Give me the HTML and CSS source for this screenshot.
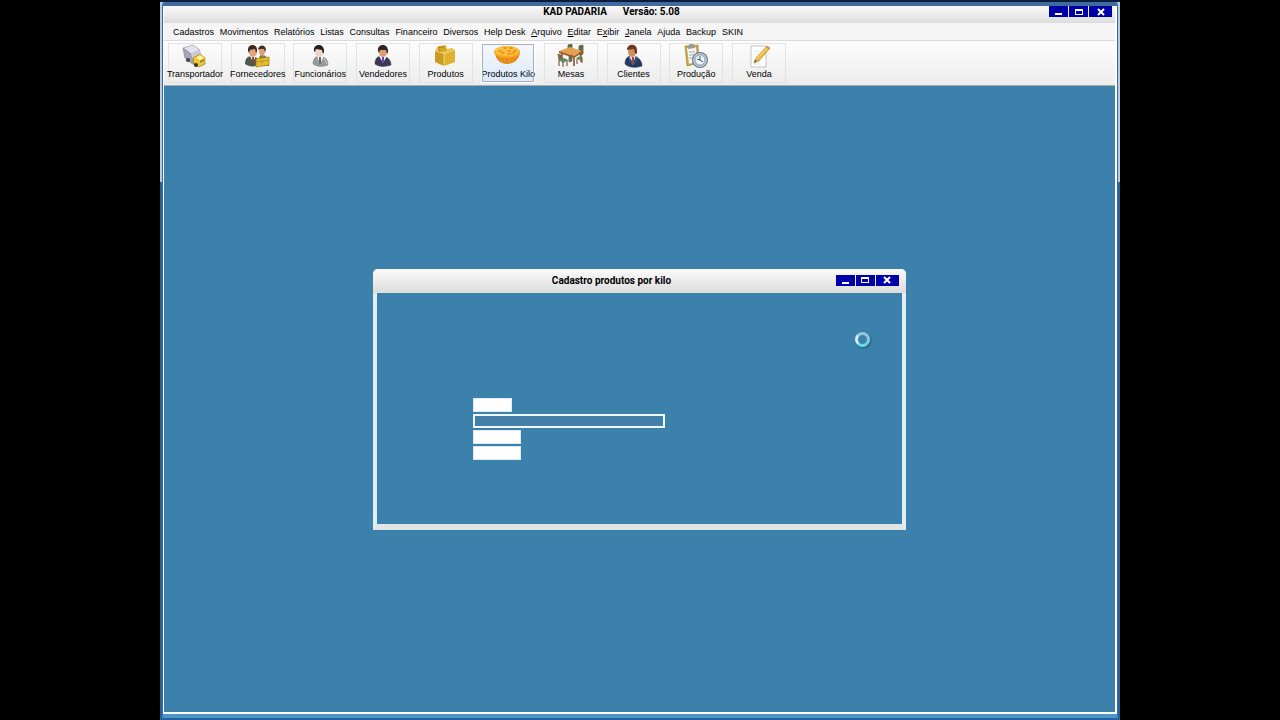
FILE: index.html
```
<!DOCTYPE html>
<html lang="pt-BR">
<head>
  <meta charset="UTF-8" />
  <meta name="viewport" content="width=device-width, initial-scale=1" />
  <title>KAD PADARIA</title>
  <link rel="stylesheet" href="styles.css">
</head>
<body>

  <div class="desktop">
    <div class="app">

      <!-- Barra de título -->
      <header class="titulo">
        <h1><span>KAD PADARIA</span><span>Versão: 5.08</span></h1>
        <div class="controles">
          <button type="button" aria-label="Minimizar"><i class="minimizar"></i></button>
          <button type="button" aria-label="Maximizar"><i class="maximizar"></i></button>
          <button type="button" class="fechar" aria-label="Fechar"><svg viewBox="0 0 8 8"><path d="M1 1L7 7M7 1L1 7" /></svg></button>
        </div>
      </header>

      <!-- Menu principal -->
      <nav class="menu">
        <div class="itens">
          <button type="button">Cadastros</button>
          <button type="button">Movimentos</button>
          <button type="button">Relatórios</button>
          <button type="button">Listas</button>
          <button type="button">Consultas</button>
          <button type="button">Financeiro</button>
          <button type="button">Diversos</button>
          <button type="button">Help Desk</button>
          <button type="button"><u>A</u>rquivo</button>
          <button type="button"><u>E</u>ditar</button>
          <button type="button">E<u>x</u>ibir</button>
          <button type="button"><u>J</u>anela</button>
          <button type="button">Ajuda</button>
          <button type="button">Backup</button>
          <button type="button">SKIN</button>
        </div>
      </nav>

      <!-- Barra de ferramentas -->
      <div class="barra">
        <div class="atalhos">
          <button type="button">
            <svg viewBox="0 0 28 24">
              <path d="M4 16l12 7 9-3-4-5z" fill="#b9b9b9" />
              <path d="M2 4l10-3 7 5-9 4z" fill="#e3e4ee" stroke="#8d8fa0" stroke-width=".6" />
              <path d="M2 4l8 6 3 10-9-6z" fill="#a4a6ba" stroke="#777990" stroke-width=".6" />
              <path d="M10 10l9-4 2 6-8 6z" fill="#c9cad8" />
              <path d="M12 14l7-4 5 4v6l-6 3-5-3z" fill="#f0c832" stroke="#a88718" stroke-width=".7" />
              <path d="M15 14l4-3 4 3-4 2z" fill="#fff3a0" />
              <path d="M19 17l4-2v2l-4 2z" fill="#8b8450" />
              <circle cx="15" cy="21" r="2" fill="#343434" />
              <circle cx="7" cy="16" r="2" fill="#444" />
            </svg>
            <span>Transportador</span>
          </button>
          <button type="button">
            <svg viewBox="0 0 28 24">
              <path d="M14 22c0-7 1-10 5-10s6 3 6 7v3z" fill="#6c7a61" />
              <ellipse cx="18" cy="7" rx="3" ry="5" fill="#dca07a" />
              <path d="M14 6c0-6 8-6 8 0l-1 2-1-3h-4z" fill="#4a3020" />
              <path d="M1 20c0-6 3-8 7-8s7 3 7 9c-5 2-10 2-14-1z" fill="#4c5a4b" />
              <path d="M6 12l3 6 3-6z" fill="#fff" />
              <path d="M8 13h2v5l-1 2-1-2z" fill="#a83a30" />
              <ellipse cx="9" cy="8" rx="4" ry="5" fill="#e0a680" />
              <path d="M4 7c-1-8 10-8 9 0l-1 2-1-4-5 1-1 3z" fill="#3c291f" />
              <path d="M16 14v-2h5v2" fill="none" stroke="#8d6b10" />
              <path d="M12 15l13-2v8l-13 2z" fill="#e8bd2c" stroke="#a57d12" stroke-width=".7" />
              <path d="M12 18l13-2M17 17h2v2h-2z" fill="#fff1a0" stroke="#a57d12" stroke-width=".6" />
            </svg>
            <span>Fornecedores</span>
          </button>
          <button type="button">
            <svg viewBox="0 0 28 24">
              <path d="M7 20c0-6 3-8 7-8s8 3 8 9c-5 2-11 2-15-1z" fill="#999" stroke="#777" stroke-width=".5" />
              <path d="M11 12l3 8 4-8z" fill="#f7f7f7" />
              <path d="M13 13h2v6l-1 2-1-2z" fill="#666" />
              <path d="M18 14l3 6" stroke="#c9c9c9" />
              <ellipse cx="13" cy="8" rx="4" ry="5" fill="#edd5c7" />
              <path d="M8 7c-1-8 11-8 10 1l-1 2-1-4-6-1-1 3z" fill="#202020" />
            </svg>
            <span>Funcionários</span>
          </button>
          <button type="button">
            <svg viewBox="0 0 28 24">
              <path d="M6 20c0-6 3-8 7-8s9 3 9 9c-6 2-12 2-16-1z" fill="#3b3857" stroke="#29263f" stroke-width=".5" />
              <path d="M10 12l4 7 4-7z" fill="#eef0fa" />
              <path d="M13 13h2v5l-1 2-1-2z" fill="#6c46a8" />
              <ellipse cx="14" cy="8" rx="4" ry="5" fill="#d99c75" />
              <path d="M9 7c-1-8 11-8 10 1l-1 2-1-4-6 0-1 3z" fill="#33231d" />
            </svg>
            <span>Vendedores</span>
          </button>
          <button type="button">
            <svg viewBox="0 0 28 24">
              <path d="M3 7l9 3v12l-9-4z" fill="#c99b24" />
              <path d="M12 10l11-4v12l-11 4z" fill="#dfb12f" />
              <path d="M3 7l3-5 8-1 1 4 5-1 3 2-11 4z" fill="#edc64e" />
              <path d="M6 3l7-1 1 4-7 2z" fill="#a97e18" />
              <path d="M7 4l6-1 2 4-7 1z" fill="#d6a625" />
              <path d="M12 10v12" stroke="#f4d56b" />
            </svg>
            <span>Produtos</span>
          </button>
          <button type="button" class="ativo">
            <svg viewBox="0 0 28 24">
              <path d="M1 7c0 8 5 13 12 13s13-5 13-13z" fill="#e58a16" />
              <path d="M5 13l4 5M10 14l2 5M16 14l-1 5M22 12l-5 6" stroke="#f09b2c" />
              <ellipse cx="13" cy="8" rx="13" ry="6" fill="#f5a925" />
              <ellipse cx="13" cy="7" rx="12" ry="5" fill="#fbc040" />
              <path d="M5 7h2M10 4h2M16 4h2M20 7h2M14 7h2M8 9h2M14 10h2M18 9h2" stroke="#df8415" stroke-width="1.5" stroke-linecap="round" />
            </svg>
            <span>Produtos Kilo</span>
          </button>
          <button type="button">
            <svg viewBox="0 0 28 24">
              <path d="M11 1l4-1v7l-4 1zM22 2l4-1v9l-4 1z" fill="#4e7354" stroke="#805025" stroke-width=".8" />
              <path d="M5 8v9M17 12v10M24 9v9" stroke="#8b4c19" stroke-width="1.5" />
              <path d="M2 7l11-4 12 4-8 5z" fill="#e2a154" />
              <path d="M2 7l15 5 8-5v2l-8 5-15-5z" fill="#a25a21" />
              <path d="M1 10l3 1 1 6-3-1zM12 12l3-1v6l-3 1z" fill="#4f7c5b" stroke="#8a5526" stroke-width=".7" />
              <path d="M2 16l5-2 4 2-5 3z" fill="#5c8966" />
              <path d="M2 16v6M6 18v5M10 16v6M20 15v5M25 14v5" stroke="#744016" />
              <path d="M19 14l4-2 3 2-4 2z" fill="#5c8966" />
            </svg>
            <span>Mesas</span>
          </button>
          <button type="button">
            <svg viewBox="0 0 28 24">
              <path d="M5 20c0-6 3-8 7-8s10 3 10 10c-6 2-13 2-17-2z" fill="#24395c" stroke="#172947" stroke-width=".5" />
              <path d="M9 12l4 7 3-7z" fill="#dfe8f2" />
              <path d="M12 13h2v6l-1 2-1-2z" fill="#ad4340" />
              <path d="M9 12l1 5 3 4M16 12v5l-3 4" fill="none" stroke="#4b698f" />
              <ellipse cx="12" cy="8" rx="4" ry="5" fill="#d68d59" />
              <path d="M7 6c0-7 10-7 10 0v4l-2-1-1-4-7 1z" fill="#6a3922" />
            </svg>
            <span>Clientes</span>
          </button>
          <button type="button">
            <svg viewBox="0 0 28 24">
              <path d="M3 2l13-1 1 18-12 3z" fill="#cda645" stroke="#9a7925" stroke-width=".6" />
              <path d="M5 4l9-1 1 14-8 3z" fill="#f2f4f5" />
              <path d="M6 2l2-2h3l2 2v2l-7 1z" fill="#9a9b98" />
              <path d="M7 8h6M7 11h5M7 14h3" stroke="#a9acb0" />
              <circle cx="18" cy="16" r="8" fill="#687786" />
              <circle cx="18" cy="16" r="7" fill="#b9c8d5" />
              <circle cx="18" cy="16" r="5" fill="#eef6fc" stroke="#77899b" stroke-width=".7" />
              <path d="M18 12v4l3 2M18 16l-3-1" fill="none" stroke="#405567" />
            </svg>
            <span>Produção</span>
          </button>
          <button type="button">
            <svg viewBox="0 0 28 24">
              <path d="M6 2h15v21H6z" fill="#fff" stroke="#b7b7b7" stroke-width=".8" />
              <path d="M8 20h8M8 17h4M9 7h7M9 10h5" stroke="#e2e4e8" />
              <path d="M9 19l2-5L22 2l3 2-11 13z" fill="#efb63d" stroke="#b98622" stroke-width=".6" />
              <path d="M12 15L23 3" stroke="#ffe38b" />
              <path d="M21 3l1-1 3 2-1 2z" fill="#c78e80" />
              <path d="M9 19l1-3 2 1z" fill="#555" />
            </svg>
            <span>Venda</span>
          </button>
        </div>
      </div>

      <!-- Área de trabalho -->
      <main class="area">
        <section class="janela">
          <header class="titulo">
            <h2>Cadastro produtos por kilo</h2>
            <div class="controles">
              <button type="button" aria-label="Minimizar"><i class="minimizar"></i></button>
              <button type="button" aria-label="Maximizar"><i class="maximizar"></i></button>
              <button type="button" class="fechar" aria-label="Fechar"><svg viewBox="0 0 8 8"><path d="M1 1L7 7M7 1L1 7" /></svg></button>
            </div>
          </header>
          <form class="formulario">
            <input type="text" class="codigo" aria-label="Código" />
            <input type="text" class="descricao" aria-label="Descrição" />
            <input type="text" class="valor" aria-label="Preço" />
            <input type="text" class="valor" aria-label="Estoque" />
          </form>
          <!-- Cursor de espera -->
          <div class="espera"></div>
        </section>
      </main>

    </div>
  </div>

</body>
</html>
```
FILE: styles.css
```
* {
  box-sizing: border-box;
}

body {
  margin: 0;
  background: #000;
  color: #000;
  font-family: "Liberation Sans", Arial, sans-serif;
  font-size: 9px;
  line-height: 12px;
}

button {
  margin: 0;
  padding: 0;
  border: none;
  background: none;
  color: inherit;
  font: inherit;
  white-space: nowrap;
}

h1, h2 {
  margin: 0;
  font-family: Roboto, sans-serif;
  font-size: 10px;
  line-height: 12px;
  font-weight: bold;
}

.desktop {
  width: 75%;
  min-height: 100vh;
  margin: 0 auto;
  padding: 2px;
  display: flex;
  background: linear-gradient(#0c1c3c 2px, #b4cbe6 2px, #b4cbe6 182px, #2563a0 182px);
}

.app {
  flex: 1;
  display: flex;
  flex-direction: column;
  border: 1px solid #3f6798;
  border-top: 4px solid #416a9f;
  border-bottom: 4px solid #4f96c8;
  border-radius: 3px 3px 0 0;
  background: #fff;
  padding: 0 2px 2px 1px;
}

/* Barras de título */
.titulo {
  display: flex;
  align-items: flex-start;
  height: 17px;
  padding-right: 3px;
  background: linear-gradient(#fafafa, #dcdcdc);
}

.titulo h1, .titulo h2 {
  flex: 1;
  display: flex;
  justify-content: center;
  gap: 16px;
  padding-left: 10px;
}

.controles {
  display: flex;
  gap: 1px;
}

.controles button {
  width: 19px;
  height: 11px;
  display: flex;
  align-items: center;
  justify-content: center;
  background: #0000a8;
}

.controles .fechar {
  width: 23px;
}

.controles svg {
  width: 8px;
  height: 8px;
  stroke: #fff;
  stroke-width: 2;
}

.minimizar {
  width: 7px;
  height: 7px;
  border-bottom: 2px solid #fff;
}

.maximizar {
  width: 8px;
  height: 6px;
  border: 1px solid #fff;
  border-top-width: 2px;
}

/* Menu */
.menu {
  padding: 3px 9px 2px;
  background: #f5f5f5;
}

.itens {
  display: flex;
  justify-content: space-between;
  max-width: 570px;
}

/* Barra de ferramentas */
.barra {
  padding: 2px 4px;
  border-top: 1px solid #dcdcdc;
  border-bottom: 1px solid #a9a9a9;
  background: linear-gradient(#fdfdfd, #ececec);
}

.atalhos {
  display: flex;
  justify-content: space-between;
  max-width: 618px;
}

.atalhos button {
  width: 54px;
  height: 40px;
  display: flex;
  flex-direction: column;
  align-items: center;
  border: 1px solid #e2e2e2;
}

.atalhos svg {
  width: 28px;
  height: 24px;
  flex: none;
}

.atalhos .ativo {
  border-color: #fff;
  outline: 1px solid #a9b0bc;
  outline-offset: -2px;
  background: linear-gradient(#f4f8ff, #dce9fa);
}

/* Área de trabalho */
.area {
  flex: 1;
  display: flex;
  align-items: center;
  justify-content: center;
  background: #3c80ac;
}

.janela {
  position: relative;
  width: 56%;
  border: 4px solid #e3eef0;
  border-top: none;
  border-bottom: 6px solid #dfe4e4;
  border-radius: 5px 5px 0 0;
  background: #e3eef0;
}

.janela .titulo {
  height: 24px;
  margin: 0 -4px;
  padding: 6px 7px 0 4px;
  border-radius: 5px 5px 0 0;
}

.formulario {
  display: flex;
  flex-direction: column;
  align-items: flex-start;
  gap: 2px;
  padding: 105px 96px 64px;
  background: #3c80ac;
}

.formulario input {
  height: 14px;
  padding: 0 2px;
  border: 1px solid #dcebf2;
  background: #fff;
  font: inherit;
}

.formulario .codigo {
  width: 39px;
}

.formulario .descricao {
  width: 192px;
  border: 2px solid #eff8fb;
  background: #437fa8;
}

.formulario .valor {
  width: 48px;
}

.espera {
  position: absolute;
  top: 63px;
  right: 32px;
  width: 15px;
  height: 15px;
  border: 3px solid #8fc8de;
  border-bottom-color: #5fe0dc;
  border-left-color: #d5eef5;
  border-radius: 50%;
  box-shadow: 1px 1px 2px #1d5a7c;
}
```
